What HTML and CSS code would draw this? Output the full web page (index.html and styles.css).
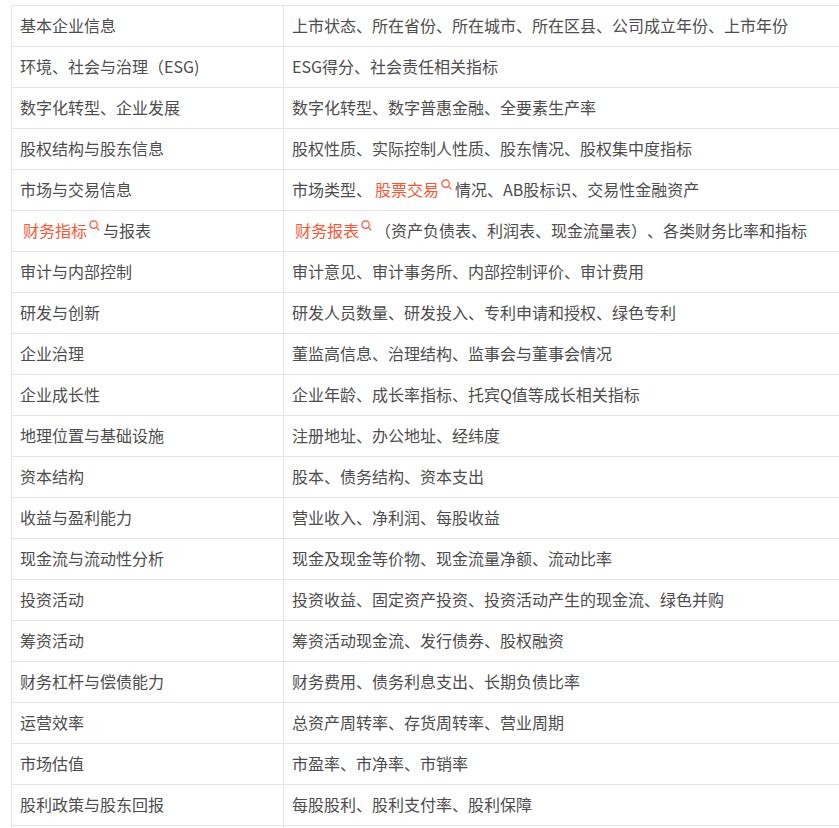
FILE: index.html
```html
<!DOCTYPE html>
<html lang="zh-CN">
<head>
<meta charset="utf-8">
<title>数据指标</title>
<link rel="stylesheet" href="styles.css">
</head>
<body>
<div class="wrap">
<table class="data">
<colgroup><col class="c1"><col class="c2"></colgroup>
<tbody>
<tr><td>基本企业信息</td><td>上市状态、所在省份、所在城市、所在区县、公司成立年份、上市年份</td></tr>
<tr><td>环境、社会与治理（ESG)</td><td>ESG得分、社会责任相关指标</td></tr>
<tr><td>数字化转型、企业发展</td><td>数字化转型、数字普惠金融、全要素生产率</td></tr>
<tr><td>股权结构与股东信息</td><td>股权性质、实际控制人性质、股东情况、股权集中度指标</td></tr>
<tr><td>市场与交易信息</td><td>市场类型、<span class="hl">股票交易</span><svg class="sico" viewBox="0 0 11 11"><circle cx="4.6" cy="4.6" r="3.7"/><line x1="7.3" y1="7.3" x2="10.3" y2="10.3"/></svg>情况、AB股标识、交易性金融资产</td></tr>
<tr><td><span class="hl">财务指标</span><svg class="sico" viewBox="0 0 11 11"><circle cx="4.6" cy="4.6" r="3.7"/><line x1="7.3" y1="7.3" x2="10.3" y2="10.3"/></svg>与报表</td><td><span class="hl">财务报表</span><svg class="sico" viewBox="0 0 11 11"><circle cx="4.6" cy="4.6" r="3.7"/><line x1="7.3" y1="7.3" x2="10.3" y2="10.3"/></svg>（资产负债表、利润表、现金流量表）、各类财务比率和指标</td></tr>
<tr><td>审计与内部控制</td><td>审计意见、审计事务所、内部控制评价、审计费用</td></tr>
<tr><td>研发与创新</td><td>研发人员数量、研发投入、专利申请和授权、绿色专利</td></tr>
<tr><td>企业治理</td><td>董监高信息、治理结构、监事会与董事会情况</td></tr>
<tr><td>企业成长性</td><td>企业年龄、成长率指标、托宾Q值等成长相关指标</td></tr>
<tr><td>地理位置与基础设施</td><td>注册地址、办公地址、经纬度</td></tr>
<tr><td>资本结构</td><td>股本、债务结构、资本支出</td></tr>
<tr><td>收益与盈利能力</td><td>营业收入、净利润、每股收益</td></tr>
<tr><td>现金流与流动性分析</td><td>现金及现金等价物、现金流量净额、流动比率</td></tr>
<tr><td>投资活动</td><td>投资收益、固定资产投资、投资活动产生的现金流、绿色并购</td></tr>
<tr><td>筹资活动</td><td>筹资活动现金流、发行债券、股权融资</td></tr>
<tr><td>财务杠杆与偿债能力</td><td>财务费用、债务利息支出、长期负债比率</td></tr>
<tr><td>运营效率</td><td>总资产周转率、存货周转率、营业周期</td></tr>
<tr><td>市场估值</td><td>市盈率、市净率、市销率</td></tr>
<tr><td>股利政策与股东回报</td><td>每股股利、股利支付率、股利保障</td></tr>
<tr class="tail"><td></td><td></td></tr>
</tbody>
</table>
</div>
</body>
</html>
```

FILE: styles.css
```css
html, body {
  margin: 0;
  padding: 0;
  background: #ffffff;
  overflow: hidden;
}

.wrap {
  padding: 5px 0 0 11px;
}

.data {
  border-collapse: collapse;
  table-layout: fixed;
  width: 900px;
  font-family: "Noto Sans CJK SC", "Noto Sans", "Liberation Sans", sans-serif;
  font-size: 16px;
  color: #4d4d4d;
  text-spacing-trim: space-all;
}

.data col.c1 {
  width: 272px;
}

.data col.c2 {
  width: 628px;
}

.data td {
  border: 1px solid #dfe6ee;
  padding: 7px 8px 9px;
  line-height: 24px;
  height: 24px;
  white-space: nowrap;
  overflow: hidden;
  vertical-align: middle;
}

.hl {
  color: #fc5531;
  padding-left: 3px;
}

.sico {
  display: inline-block;
  width: 11px;
  height: 11px;
  margin: 2px 3px 0 2px;
  vertical-align: top;
  fill: none;
  stroke: #fc5531;
  stroke-width: 1.2;
}
```
